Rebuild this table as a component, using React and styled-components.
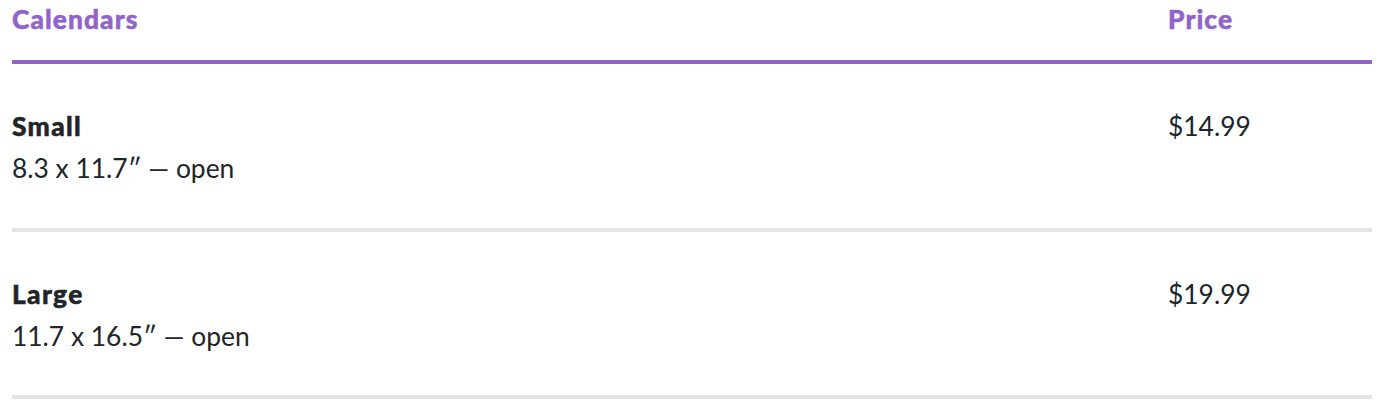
import React from "react";
import styled, { createGlobalStyle } from "styled-components";

const Global = createGlobalStyle`
  html, body { margin: 0; padding: 0; background: #ffffff; }
  body { font-family: Lato, "Noto Sans", sans-serif; color: #212529; }
`;

const Wrapper = styled.div`
  padding: 0 20px 0 12px;
`;

const Table = styled.table`
  width: 100%;
  border-collapse: collapse;
  font-size: 26.4px;
  line-height: 1.6;
`;

const HeadCell = styled.th`
  text-align: left;
  font-weight: 900;
  letter-spacing: 0.04em;
  -webkit-text-stroke: 0.5px currentColor;
  color: #9264c8;
  line-height: 32px;
  padding: 3px 0 25px;
  border-bottom: 4px solid #9264c8;
  width: ${(p) => p.$width || "auto"};
`;

const Row = styled.tr`
  border-bottom: 4px solid #e4e4e4;
`;

const Cell = styled.td`
  vertical-align: top;
  padding: 41px 0 38px;
`;

const Name = styled.div`
  font-weight: 900;
  letter-spacing: 0.05em;
  -webkit-text-stroke: 0.5px currentColor;
`;

const Detail = styled.div`
  font-weight: 400;
`;

const items = [
  { name: "Small", detail: "8.3 x 11.7\u2033 \u2014 open", price: "$14.99" },
  { name: "Large", detail: "11.7 x 16.5\u2033 \u2014 open", price: "$19.99" },
];

export default function App() {
  return (
    <>
      <Global />
      <Wrapper>
        <Table>
          <thead>
            <tr>
              <HeadCell $width="85%">Calendars</HeadCell>
              <HeadCell>Price</HeadCell>
            </tr>
          </thead>
          <tbody>
            {items.map((it) => (
              <Row key={it.name}>
                <Cell>
                  <Name>{it.name}</Name>
                  <Detail>{it.detail}</Detail>
                </Cell>
                <Cell>{it.price}</Cell>
              </Row>
            ))}
          </tbody>
        </Table>
      </Wrapper>
    </>
  );
}
